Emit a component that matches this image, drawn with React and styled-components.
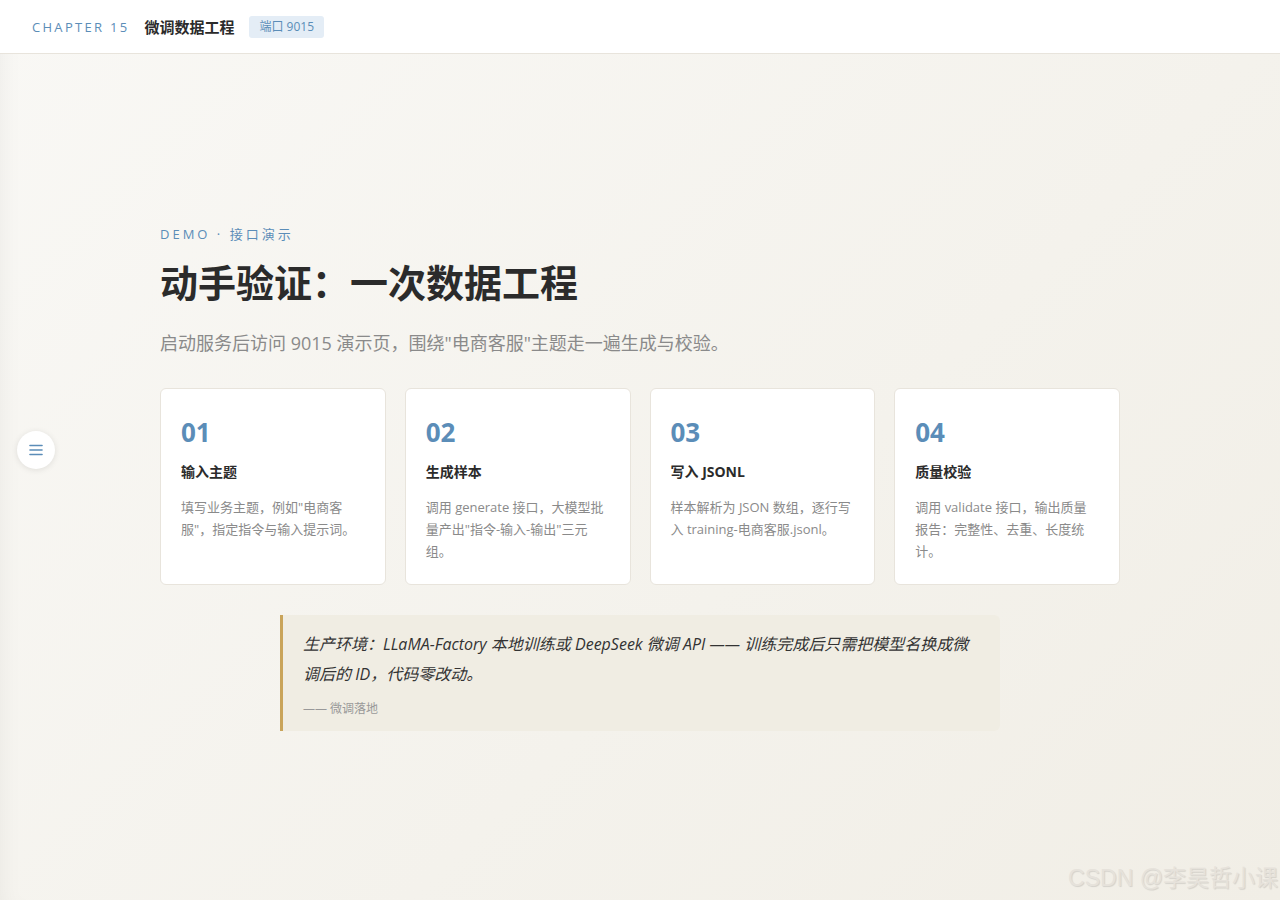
import React from "react";
import styled, { createGlobalStyle } from "styled-components";

const Global = createGlobalStyle`
  html, body { margin: 0; padding: 0; height: 100%; }
  body {
    font-family: "Open Sans", "Noto Sans CJK SC", sans-serif;
    background: linear-gradient(135deg, #f9f8f5 0%, #f4f2ec 60%, #f1eee6 100%);
    color: #2b2b2b;
  }
  #root { min-height: 100vh; }
`;

const Page = styled.div`
  min-height: 100vh;
  display: flex;
  flex-direction: column;
  position: relative;
  box-shadow: inset 18px 0 24px -18px rgba(0,0,0,0.06);
`;

const TopBar = styled.header`
  height: 54px;
  box-sizing: border-box;
  background: #fff;
  border-bottom: 1px solid #e8e4dc;
  display: flex;
  align-items: center;
  padding: 0 32px;
  gap: 15px;
`;

const Chapter = styled.span`
  font-size: 13px;
  letter-spacing: 2.3px;
  color: #5b8db8;
`;

const ChapterTitle = styled.span`
  font-size: 15px;
  font-weight: 700;
  color: #2b2b2b;
`;

const Badge = styled.span`
  font-size: 12px;
  line-height: 16px;
  color: #5b8db8;
  background: #e4edf6;
  border-radius: 3px;
  padding: 3px 10px;
`;

const Main = styled.main`
  flex: 1;
  display: flex;
  align-items: center;
  justify-content: center;
  padding-top: 2px;
`;

const Content = styled.section`
  width: 960px;
  display: flex;
  flex-direction: column;
`;

const Eyebrow = styled.div`
  font-size: 13px;
  letter-spacing: 3px;
  color: #5b8db8;
  line-height: 18px;
`;

const Heading = styled.h1`
  margin: 13px 0 0;
  font-size: 38px;
  line-height: 52px;
  font-weight: 700;
  color: #2b2b2b;
`;

const Lead = styled.p`
  margin: 21px 0 0;
  font-size: 18px;
  line-height: 28px;
  color: #8a8a8a;
`;

const Steps = styled.div`
  margin-top: 31px;
  display: grid;
  grid-template-columns: repeat(4, 1fr);
  gap: 19px;
`;

const Card = styled.div`
  background: #fff;
  border: 1px solid #e8e4dc;
  border-radius: 6px;
  padding: 26px 20px 22px;
  min-height: 196px;
  box-sizing: border-box;
`;

const Num = styled.div`
  font-size: 26px;
  font-weight: 700;
  line-height: 34px;
  color: #5b8db8;
`;

const CardTitle = styled.div`
  margin-top: 12px;
  font-size: 14px;
  font-weight: 700;
  line-height: 22px;
  color: #2b2b2b;
`;

const CardText = styled.p`
  margin: 13px 0 0;
  font-size: 13px;
  line-height: 22px;
  color: #8a8a8a;
`;

const Quote = styled.blockquote`
  margin: 30px auto 0;
  width: 720px;
  box-sizing: border-box;
  background: #f0ede3;
  border-left: 3px solid #c9a45a;
  border-radius: 0 6px 6px 0;
  padding: 14px 20px 13px 20px;
`;

const QuoteText = styled.p`
  margin: 0;
  font-size: 16px;
  line-height: 30px;
  font-style: italic;
  color: #333;
`;

const QuoteBy = styled.div`
  margin-top: 11px;
  font-size: 12px;
  line-height: 18px;
  color: #999;
`;

const MenuButton = styled.button`
  position: absolute;
  left: 17px;
  top: 431px;
  width: 38px;
  height: 38px;
  border-radius: 50%;
  border: none;
  background: #fff;
  box-shadow: 0 1px 6px rgba(0,0,0,0.1);
  display: flex;
  align-items: center;
  justify-content: center;
  padding: 0;
  cursor: pointer;
`;

const Watermark = styled.div`
  position: absolute;
  right: 2px;
  bottom: 7px;
  font-family: "Liberation Sans", "Noto Sans CJK SC", sans-serif;
  font-size: 23px;
  font-weight: 400;
  color: #e6e2db;
  text-shadow: 1px 1px 1px rgba(0,0,0,0.12);
`;

const steps = [
  { n: "01", t: "输入主题", d: "填写业务主题，例如\"电商客服\"，指定指令与输入提示词。" },
  { n: "02", t: "生成样本", d: "调用 generate 接口，大模型批量产出\"指令-输入-输出\"三元组。" },
  { n: "03", t: "写入 JSONL", d: "样本解析为 JSON 数组，逐行写入 training-电商客服.jsonl。" },
  { n: "04", t: "质量校验", d: "调用 validate 接口，输出质量报告：完整性、去重、长度统计。" },
];

export default function App() {
  return (
    <>
      <Global />
      <Page>
        <TopBar>
          <Chapter>CHAPTER 15</Chapter>
          <ChapterTitle>微调数据工程</ChapterTitle>
          <Badge>端口 9015</Badge>
        </TopBar>
        <Main>
          <Content>
            <Eyebrow>DEMO · 接口演示</Eyebrow>
            <Heading>动手验证：一次数据工程</Heading>
            <Lead>启动服务后访问 9015 演示页，围绕"电商客服"主题走一遍生成与校验。</Lead>
            <Steps>
              {steps.map((s) => (
                <Card key={s.n}>
                  <Num>{s.n}</Num>
                  <CardTitle>{s.t}</CardTitle>
                  <CardText>{s.d}</CardText>
                </Card>
              ))}
            </Steps>
            <Quote>
              <QuoteText>
                生产环境：LLaMA-Factory 本地训练或 DeepSeek 微调 API —— 训练完成后只需把模型名换成微调后的 ID，代码零改动。
              </QuoteText>
              <QuoteBy>—— 微调落地</QuoteBy>
            </Quote>
          </Content>
        </Main>
        <MenuButton aria-label="menu">
          <svg width="14" height="12" viewBox="0 0 14 12">
            <g stroke="#5b8db8" strokeWidth="1.6" strokeLinecap="round">
              <line x1="1" y1="1.5" x2="13" y2="1.5" />
              <line x1="1" y1="6" x2="13" y2="6" />
              <line x1="1" y1="10.5" x2="13" y2="10.5" />
            </g>
          </svg>
        </MenuButton>
        <Watermark>CSDN @李昊哲小课</Watermark>
      </Page>
    </>
  );
}
